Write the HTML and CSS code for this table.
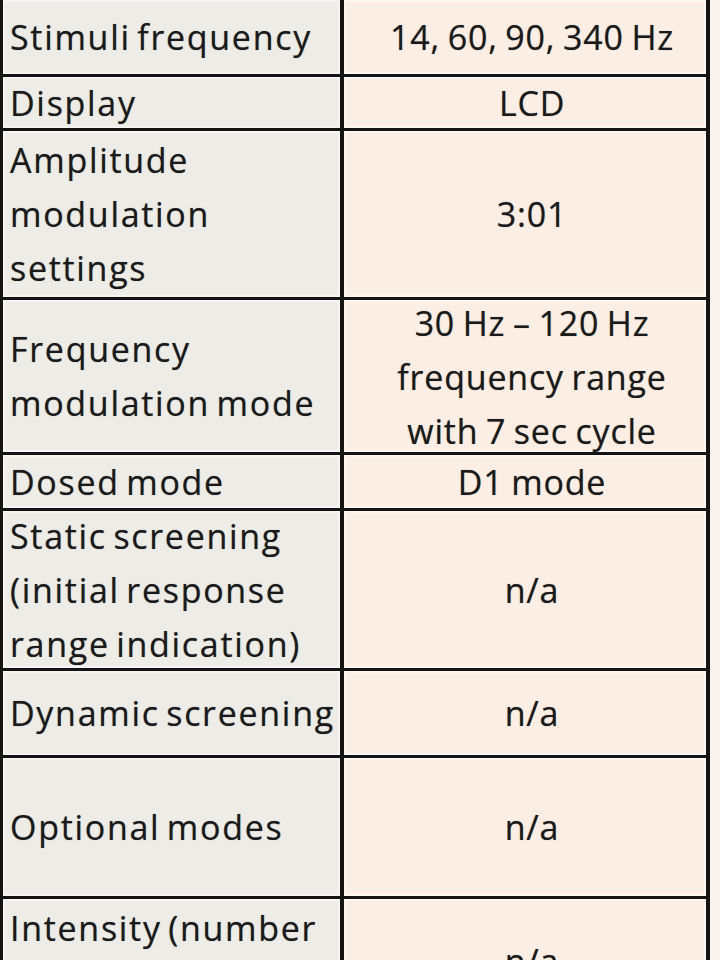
FILE: index.html
```html
<!DOCTYPE html>
<html lang="en">
<head>
<meta charset="utf-8">
<title>Device specifications</title>
<link rel="stylesheet" href="styles.css">
</head>
<body>
<div class="page">
  <div class="spec">
    <div class="cell label r1">Stimuli frequency</div>
    <div class="cell value r1">14, 60, 90, 340 Hz</div>

    <div class="cell label r2">Display</div>
    <div class="cell value r2">LCD</div>

    <div class="cell label r3">Amplitude<br>modulation<br>settings</div>
    <div class="cell value r3">3:01</div>

    <div class="cell label r4">Frequency<br>modulation mode</div>
    <div class="cell value r4 tight"><span class="stack">30 Hz – 120 Hz<br>frequency range<br>with 7 sec cycle</span></div>

    <div class="cell label r5">Dosed mode</div>
    <div class="cell value r5">D1 mode</div>

    <div class="cell label r6">Static screening<br>(initial response<br>range indication)</div>
    <div class="cell value r6">n/a</div>

    <div class="cell label r7">Dynamic screening</div>
    <div class="cell value r7">n/a</div>

    <div class="cell label r8">Optional modes</div>
    <div class="cell value r8">n/a</div>

    <div class="cell label r9 top">Intensity (number<br>of levels)</div>
    <div class="cell value r9">n/a</div>
  </div>
</div>
</body>
</html>
```

FILE: styles.css
```css
html, body {
  margin: 0;
  padding: 0;
  background: #f9f4ef;
}

.page {
  width: 720px;
  height: 960px;
  overflow: hidden;
  background: #f9f4ef;
}

.spec {
  width: 703px;
  display: grid;
  grid-template-columns: 337px 362px;
  column-gap: 4px;
  row-gap: 3px;
  background: #141414;
  border-left: 3px solid #141414;
  border-right: 4px solid #141414;
  font-family: "Open Sans", "Lato", sans-serif;
  font-size: 34px;
  line-height: 54px;
  color: #1a1a1a;
}

.cell {
  display: flex;
  align-items: center;
  box-shadow: inset 0 0 0 2px rgba(255, 255, 255, 0.45);
  text-shadow: 0 0 1px rgba(0, 0, 0, 0.45);
}

.label {
  background: #eeece7;
  padding-left: 7px;
  white-space: nowrap;
  letter-spacing: 1.7px;
  word-spacing: -4px;
}

.value {
  background: #fbeee5;
  justify-content: center;
  text-align: center;
  padding-left: 14px;
  white-space: nowrap;
  letter-spacing: 0.8px;
  word-spacing: -2px;
}

.tight {
  align-items: flex-end;
}

.stack {
  display: block;
  margin-bottom: -6px;
}

.r1 { height: 74px; }
.r2 { height: 51px; }
.r3 { height: 166px; }
.r4 { height: 152px; }
.r5 { height: 53px; }
.r6 { height: 157px; }
.r7 { height: 84px; }
.r8 { height: 138px; }
.r9 { height: 124px; }

.label.top {
  align-items: flex-start;
  padding-top: 2px;
}
```
